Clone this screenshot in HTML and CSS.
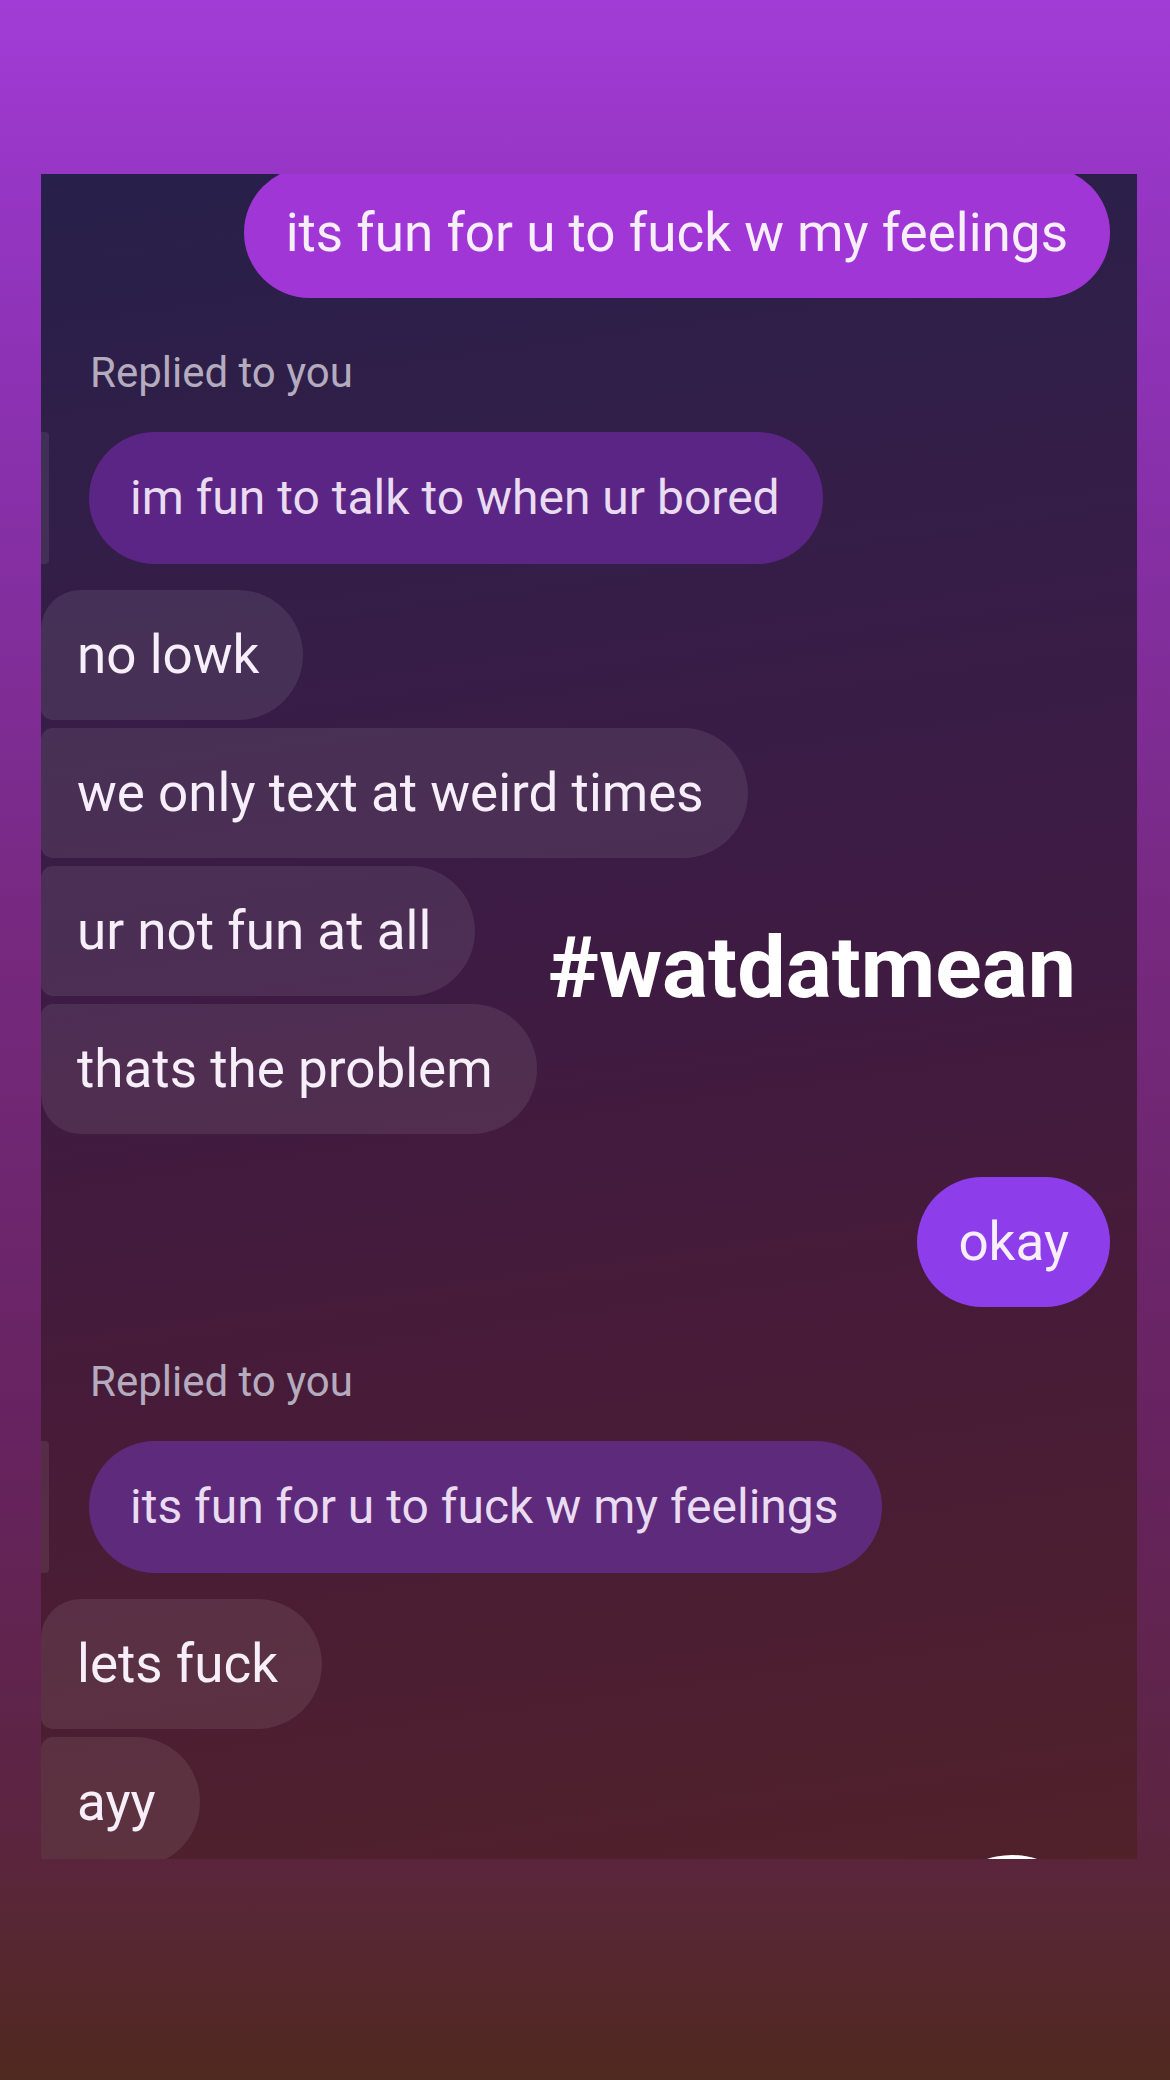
FILE: index.html
```html
<!DOCTYPE html>
<html lang="en">
<head>
    <meta charset="UTF-8">
    <meta name="viewport" content="width=device-width, initial-scale=1.0">
    <title>watdatmean</title>
    <link rel="stylesheet" href="styles.css">
</head>
<body>

    <div class="page">
        <div class="chat">
            <div class="row right first">
                <div class="bubble sent">its fun for u to fuck w my feelings</div>
            </div>

            <div class="replied">Replied to you</div>
            <div class="row quote-row">
                <span class="quote-bar"></span>
                <div class="bubble quote">im fun to talk to when ur bored</div>
            </div>

            <div class="group">
                <div class="bubble recv top">no lowk</div>
                <div class="bubble recv">we only text at weird times</div>
                <div class="bubble recv">ur not fun at all</div>
                <div class="bubble recv bottom">thats the problem</div>
            </div>

            <div class="row right okay-row">
                <div class="bubble sent okay">okay</div>
            </div>

            <div class="replied second">Replied to you</div>
            <div class="row quote-row">
                <span class="quote-bar"></span>
                <div class="bubble quote quote-2">its fun for u to fuck w my feelings</div>
            </div>

            <div class="group">
                <div class="bubble recv top">lets fuck</div>
                <div class="bubble recv">ayy</div>
            </div>

            <!-- sticker text on top of the screenshot -->
            <div class="tag">#watdatmean</div>
            <span class="seen-dot"></span>
        </div>
    </div>

</body>
</html>
```

FILE: styles.css
```css
body {
    margin: 0;
    padding: 0;
    width: 1170px;
    height: 2080px;
    overflow: hidden;
    font-family: Roboto, "Liberation Sans", sans-serif;
    background: linear-gradient(180deg, #a23cd6 0%, #9636c4 9%, #8a31b0 20%, #76297f 45%, #66235e 70%, #5c2540 88%, #50291f 100%);
}
.page {
    padding: 174px 33px 0 41px;
}
.chat {
    position: relative;
    height: 1685px;
    overflow: hidden;
    display: flex;
    flex-direction: column;
    background: linear-gradient(172deg, #27204a 0%, #331e48 22%, #3d1b44 45%, #461b3a 65%, #4c1e31 85%, #51212a 100%);
}
.row {
    display: flex;
}
.right {
    justify-content: flex-end;
    padding-right: 27px;
}
.first {
    margin-top: -7px;
}
.bubble {
    font-size: 53px;
    line-height: 62px;
    padding: 34px 42px;
    border-radius: 66px;
    white-space: nowrap;
    color: #f6eef9;
}
.sent {
    background-color: #a036d6;
    padding: 35px 42px 34px;
}
.okay {
    background-color: #8e3deb;
    padding: 34px 41px;
}
.okay-row {
    margin-top: 43px;
}
.replied {
    margin: 50px 0 0 49px;
    font-size: 42px;
    line-height: 50px;
    color: #b4acbe;
}
.quote-row {
    margin-top: 34px;
    align-items: stretch;
}
.quote-bar {
    width: 8px;
    border-radius: 0 4px 4px 0;
    background-color: rgba(255, 255, 255, 0.08);
    margin-right: 40px;
}
.quote {
    font-size: 48px;
    line-height: 62px;
    padding: 35px 43px 35px 41px;
    background-color: #5b2585;
    color: #e9dcf1;
}
.quote-2 {
    background-color: #5e2a7c;
}
.group {
    display: flex;
    flex-direction: column;
    align-items: flex-start;
    gap: 8px;
    margin-top: 26px;
}
.recv {
    padding: 34px 44px 34px 36px;
    background-color: rgba(255, 255, 255, 0.085);
    border-radius: 12px 66px 66px 12px;
}
.recv.top {
    border-top-left-radius: 40px;
}
.recv.bottom {
    border-bottom-left-radius: 40px;
}
.tag {
    position: absolute;
    left: 507px;
    top: 751px;
    font-size: 86px;
    line-height: 86px;
    font-weight: bold;
    color: #ffffff;
}
.seen-dot {
    position: absolute;
    left: 891px;
    top: 1681px;
    width: 160px;
    height: 160px;
    border-radius: 50%;
    background-color: #ffffff;
}
```
